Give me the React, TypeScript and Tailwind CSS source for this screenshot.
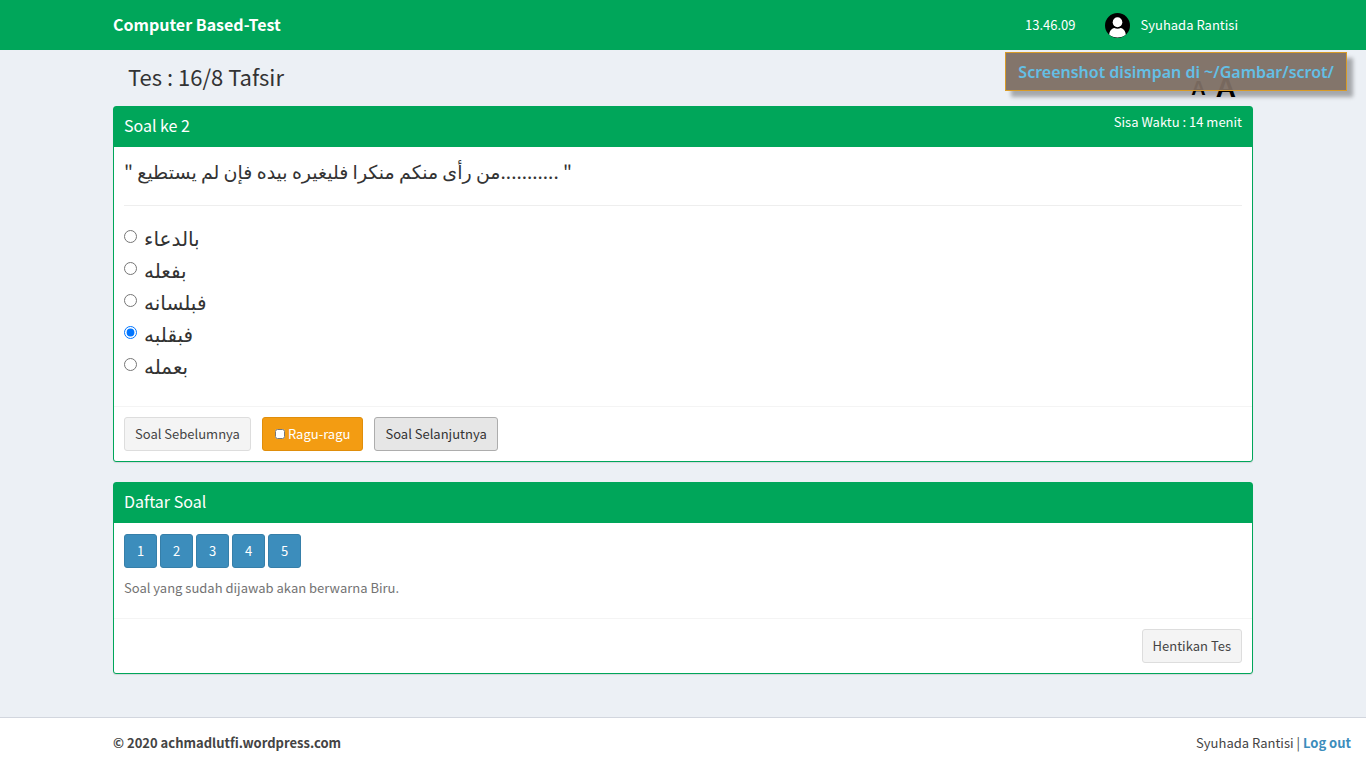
import { useState, type ReactNode } from "react";

const answers = ["بالدعاء", "بفعله", "فبلسانه", "فبقلبه", "بعمله"];
const questions = [1, 2, 3, 4, 5];

function Avatar() {
  return (
    <svg viewBox="0 0 25 25" className="size-[25px] shrink-0" aria-hidden="true">
      <defs>
        <clipPath id="avatar-disc">
          <circle cx="12.5" cy="12.5" r="12.5" />
        </clipPath>
      </defs>
      <circle cx="12.5" cy="12.5" r="12.5" fill="#000" />
      <g clipPath="url(#avatar-disc)" fill="#fff">
        <ellipse cx="12.5" cy="9.3" rx="4.8" ry="5" />
        <path d="M4.300 22c0-4 2.200-6.200 5-7 1.900 1.100 4.500 1.100 6.400 0 2.800.8 5 3 5 7-2 1.700-4.800 2.400-8.200 2.400s-6.200-.7-8.200-2.400z" />
      </g>
    </svg>
  );
}

function Box({ title, aside, footer, children }: { title: string; aside?: string; footer: ReactNode; children: ReactNode }) {
  return (
    <section className="mb-5 rounded-[3px] border border-[#00a65a] bg-white shadow-[0_1px_1px_rgba(0,0,0,0.1)]">
      <header className="flex h-10 items-start justify-between bg-[#00a65a] px-[10px] text-white">
        <h2 className="text-[16px] leading-9">{title}</h2>
        {aside && <span className="leading-[30px]">{aside}</span>}
      </header>
      <div className="p-[10px]">{children}</div>
      <footer className="border-t border-[#f4f4f4] p-[10px]">{footer}</footer>
    </section>
  );
}

export default function App() {
  const [answer, setAnswer] = useState(3);
  const [unsure, setUnsure] = useState(false);

  return (
    <div className="flex min-h-screen flex-col bg-[#ecf0f5] font-['Noto_Sans_CJK_SC',sans-serif] text-[13px] leading-5 text-[#333]">
      <header className="bg-[#00a65a] text-white">
        <div className="mx-auto flex h-[50px] max-w-[1170px] items-start justify-between px-[15px]">
          <a href="#" className="text-[16px] leading-[48px] font-bold">Computer Based-Test</a>
          <div className="flex h-full items-center pr-[15px]">
            <span>13.46.09</span>
            <a href="#" className="ml-[30px] flex items-center gap-[10px]">
              <Avatar />
              <span>Syuhada Rantisi</span>
            </a>
          </div>
        </div>
      </header>

      <main className="mx-auto w-full max-w-[1170px] grow px-[15px]">
        <div className="flex h-14 items-start justify-between px-[15px]">
          <h1 className="text-[22px] leading-[52px]">Tes : 16/8 Tafsir</h1>
          <div className="flex h-full items-end gap-[10px] pr-[2px] pb-2 font-['Liberation_Sans',sans-serif] font-bold text-black">
            <button type="button" aria-label="Perkecil huruf" className="text-[20px] leading-5">A</button>
            <button type="button" aria-label="Perbesar huruf" className="text-[28px] leading-5">A</button>
          </div>
        </div>

        <Box
          title="Soal ke 2"
          aside="Sisa Waktu : 14 menit"
          footer={
            <div className="flex gap-[11px]">
              <button type="button" className="h-[34px] rounded-[3px] border border-[#ddd] bg-[#f4f4f4] px-[10px] text-[#444]">Soal Sebelumnya</button>
              <label className="flex h-[34px] items-center gap-[3px] rounded-[3px] border border-[#e08e0b] bg-[#f39c12] px-3 text-white">
                <input type="checkbox" checked={unsure} onChange={(e) => setUnsure(e.target.checked)} className="size-[10px]" />
                Ragu-ragu
              </label>
              <button type="button" className="h-[34px] rounded-[3px] border border-[#adadad] bg-[#e6e6e6] px-[10px] text-[#333]">Soal Selanjutnya</button>
            </div>
          }
        >
          <div className="font-['Noto_Sans_CJK_SC','DejaVu_Sans',sans-serif]">
            <p className="h-7 text-[19px] leading-7">" من رأى منكم منكرا فليغيره بيده فإن لم يستطيع........... "</p>
            <hr className="my-5 border-[#eee]" />
            <div className="mb-[10px] text-[20px]">
              {answers.map((text, i) => (
                <label key={text} className="flex h-8 items-start gap-[7px]">
                  <input type="radio" name="jawaban" checked={answer === i} onChange={() => setAnswer(i)} className="mt-1 size-[13px]" />
                  <span className="leading-6">{text}</span>
                </label>
              ))}
            </div>
          </div>
        </Box>

        <Box
          title="Daftar Soal"
          footer={
            <div className="flex justify-end">
              <button type="button" className="h-[34px] rounded-[3px] border border-[#ddd] bg-[#f4f4f4] px-[10px] text-[#444]">Hentikan Tes</button>
            </div>
          }
        >
          <div className="flex gap-[3px] pt-px">
            {questions.map((n) => (
              <button key={n} type="button" className="h-[34px] w-[33px] rounded-[3px] border border-[#367fa9] bg-[#3c8dbc] text-white">{n}</button>
            ))}
          </div>
          <p className="my-[10px] text-[#737373]">Soal yang sudah dijawab akan berwarna Biru.</p>
        </Box>
      </main>

      <footer className="border-t border-[#d2d6de] bg-white text-[#444]">
        <div className="flex justify-between py-[15px] pr-[15px] pl-[max(15px,calc((100%-1140px)/2))]">
          <strong>© 2020 achmadlutfi.wordpress.com</strong>
          <span>
            Syuhada Rantisi | <a href="#" className="font-bold text-[#3c8dbc]">Log out</a>
          </span>
        </div>
      </footer>

      <div role="status" className="absolute top-[52px] right-[19px] border border-[#d89b27] bg-[#7d6e63]/95 px-3 pt-[7px] pb-[6px] font-['Noto_Sans',sans-serif] text-[16px] leading-6 font-semibold text-[#64bfe5] shadow-[6px_6px_4px_rgba(0,0,0,0.3)]">
        Screenshot disimpan di ~/Gambar/scrot/
      </div>
    </div>
  );
}
